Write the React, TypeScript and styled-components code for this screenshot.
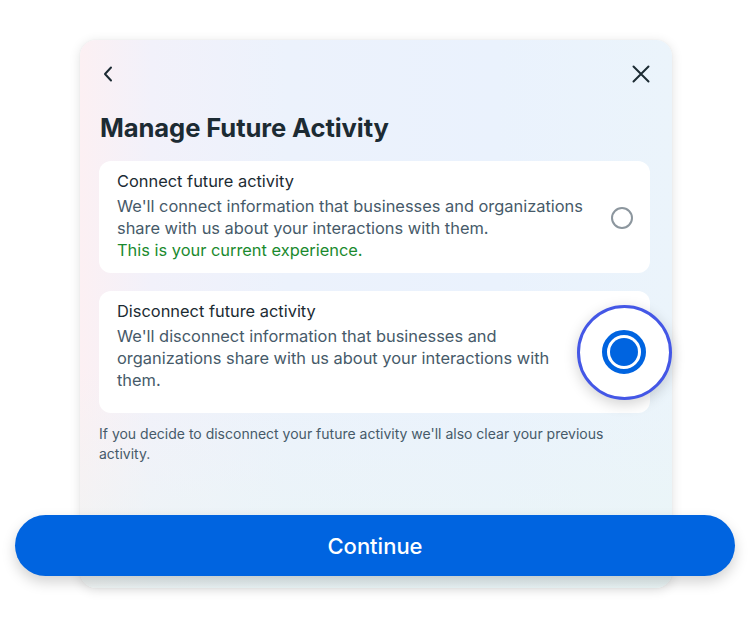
import React from "react";
import styled, { createGlobalStyle } from "styled-components";

const Global = createGlobalStyle`
  html, body { margin: 0; padding: 0; background: #ffffff; }
  body { font-family: Inter, "Noto Sans", "Liberation Sans", sans-serif; -webkit-font-smoothing: antialiased; }
  * { box-sizing: border-box; }
`;

const Page = styled.div`
  width: 750px;
  height: 629px;
  padding: 40px 0 0 80px;
  display: flex;
`;

const Card = styled.div`
  width: 592px;
  height: 548px;
  border-radius: 16px;
  padding: 22px 22px 0 19px;
  display: flex;
  flex-direction: column;
  background:
    linear-gradient(180deg, rgba(255,255,255,0) 60%, rgba(234,246,244,0.7) 100%),
    linear-gradient(90deg, #fcf0f3 0%, #f2f1fa 12%, #ecf2fc 35%, #eaf2fd 70%, #ebf4fb 100%);
  box-shadow: 0 2px 12px rgba(0, 0, 0, 0.12), 0 0 2px rgba(0,0,0,0.06);
`;

const Header = styled.div`
  height: 24px;
  display: flex;
  justify-content: space-between;
  align-items: center;
  margin: 0 -3px 0 -2px;
`;

const IconButton = styled.span`
  width: 24px;
  height: 24px;
  display: flex;
  align-items: center;
  justify-content: center;
  color: #1c2b33;
`;

const Title = styled.h1`
  margin: 27px 0 0 1px;
  font-size: 25.6px;
  line-height: 30px;
  font-weight: 700;
  color: #1c2b33;
  letter-spacing: -0.1px;
`;

const Options = styled.div`
  margin-top: 18px;
  display: flex;
  flex-direction: column;
  gap: 18px;
`;

const Option = styled.div`
  background: #ffffff;
  border-radius: 12px;
  padding: 9px 17px 12px 18px;
  display: flex;
  align-items: center;
`;

const TextCol = styled.div<{ $pb: number }>`
  flex: 1;
  min-width: 0;
  padding-bottom: ${(p) => p.$pb}px;
`;

const OptionTitle = styled.div`
  font-size: 16.4px;
  line-height: 22px;
  margin-bottom: 3px;
  color: #1c2b33;
  font-weight: 400;
`;

const OptionDesc = styled.div<{ $green?: boolean }>`
  font-size: 16.4px;
  line-height: 22px;
  color: ${(p) => (p.$green ? "#1a8a2e" : "#465a69")};
`;

const RadioSlot = styled.div<{ $w: number; $mr: number }>`
  width: ${(p) => p.$w}px;
  margin-right: ${(p) => p.$mr}px;
  flex-shrink: 0;
  display: flex;
  justify-content: flex-end;
  align-items: center;
  position: relative;
`;

const RadioEmpty = styled.span`
  width: 22px;
  height: 22px;
  border-radius: 50%;
  border: 2px solid #8c969e;
  margin: 0 0 -4px 0;
`;

const Magnifier = styled.span`
  position: absolute;
  left: 50%;
  top: 50%;
  width: 95px;
  height: 95px;
  margin: -47px 0 0 -47px;
  border-radius: 50%;
  border: 3px solid #4457e6;
  background: #ffffff;
  box-shadow: 0 4px 14px rgba(0, 0, 0, 0.18);
`;

const RadioSelected = styled.span`
  width: 44px;
  height: 44px;
  border-radius: 50%;
  border: 5px solid #0064e0;
  padding: 3px;
  display: flex;
  position: relative;
  z-index: 1;
  &::after {
    content: "";
    flex: 1;
    border-radius: 50%;
    background: #0064e0;
  }
`;

const RadioHolder = styled.span`
  width: 44px;
  height: 44px;
  margin-top: 3px;
  position: relative;
  display: flex;
`;

const Footnote = styled.p`
  margin: 11px 0 0 0;
  font-size: 14px;
  line-height: 20px;
  color: #465a69;
`;

const ContinueButton = styled.button`
  margin: 51px -85px 0 -84px;
  height: 61px;
  border: none;
  border-radius: 31px;
  background: #0064e0;
  color: #ffffff;
  font-family: Inter, "Noto Sans", sans-serif;
  font-size: 22px;
  font-weight: 500;
  box-shadow: 0 6px 14px rgba(0, 0, 0, 0.18);
  cursor: pointer;
`;

export default function App() {
  return (
    <>
      <Global />
      <Page>
        <Card>
          <Header>
            <IconButton>
              <svg width="24" height="24" viewBox="0 0 24 24" fill="none">
                <path d="M14 5.5 L8 12 L14 18.5" stroke="#1c2b33" strokeWidth="2" strokeLinecap="round" strokeLinejoin="round" />
              </svg>
            </IconButton>
            <IconButton>
              <svg width="24" height="24" viewBox="0 0 24 24" fill="none">
                <path d="M4.5 4.5 L19.5 19.5 M19.5 4.5 L4.5 19.5" stroke="#1c2b33" strokeWidth="2" strokeLinecap="round" />
              </svg>
            </IconButton>
          </Header>
          <Title>Manage Future Activity</Title>
          <Options>
            <Option>
              <TextCol $pb={0}>
                <OptionTitle>Connect future activity</OptionTitle>
                <OptionDesc>
                  We'll connect information that businesses and organizations share with us about your interactions with them.
                </OptionDesc>
                <OptionDesc $green>This is your current experience.</OptionDesc>
              </TextCol>
              <RadioSlot $w={44} $mr={0}>
                <RadioEmpty />
              </RadioSlot>
            </Option>
            <Option>
              <TextCol $pb={10}>
                <OptionTitle>Disconnect future activity</OptionTitle>
                <OptionDesc>
                  We'll disconnect information that businesses and organizations share with us about your interactions with them.
                </OptionDesc>
              </TextCol>
              <RadioSlot $w={80} $mr={-13}>
                <RadioHolder>
                  <Magnifier />
                  <RadioSelected />
                </RadioHolder>
              </RadioSlot>
            </Option>
          </Options>
          <Footnote>
            If you decide to disconnect your future activity we'll also clear your previous activity.
          </Footnote>
          <ContinueButton>Continue</ContinueButton>
        </Card>
      </Page>
    </>
  );
}
